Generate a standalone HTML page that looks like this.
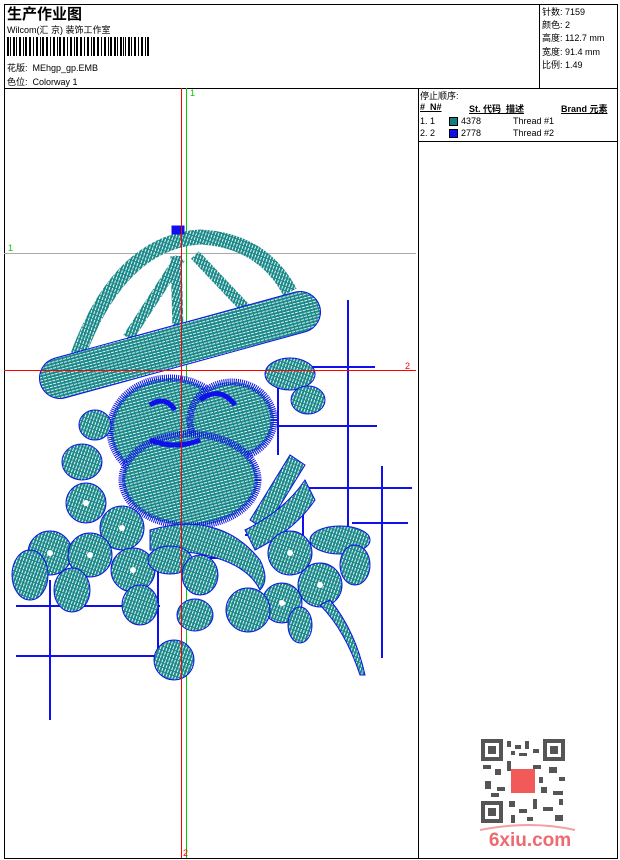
<!DOCTYPE html>
<html><head><meta charset="utf-8"><style>
body{margin:0;background:#fff;width:620px;height:860px;overflow:hidden;font-family:"Liberation Sans","Noto Sans CJK SC",sans-serif;color:#000}
.a{position:absolute;white-space:nowrap}
</style></head><body>
<svg width="620" height="860" style="position:absolute;left:0;top:0">
<defs>
<pattern id="h" width="4" height="3" patternUnits="userSpaceOnUse" patternTransform="rotate(-15)">
<rect width="4" height="3" fill="#1a8888"/><rect x="0" y="0" width="3" height="1" fill="#e0f2f2"/></pattern>
<pattern id="v" width="3" height="4" patternUnits="userSpaceOnUse" patternTransform="rotate(20)">
<rect width="3" height="4" fill="#1a8888"/><rect x="0" y="0" width="1" height="3" fill="#e8f6f6"/></pattern>
</defs>
<rect x="4.5" y="4.5" width="613" height="854" fill="none" stroke="#000"/>
<line x1="4" y1="88.5" x2="617" y2="88.5" stroke="#000"/>
<line x1="539.5" y1="4" x2="539.5" y2="88" stroke="#000"/>
<line x1="418.5" y1="88" x2="418.5" y2="858" stroke="#000"/>
<line x1="418" y1="141.5" x2="617" y2="141.5" stroke="#000"/>
<g fill="#000">
<rect x="7" y="37" width="2" height="19"/><rect x="10" y="37" width="1" height="19"/><rect x="13" y="37" width="2" height="19"/><rect x="16" y="37" width="1" height="19"/><rect x="19" y="37" width="2" height="19"/><rect x="23" y="37" width="1" height="19"/><rect x="25" y="37" width="2" height="19"/><rect x="29" y="37" width="2" height="19"/><rect x="33" y="37" width="1" height="19"/><rect x="36" y="37" width="2" height="19"/><rect x="40" y="37" width="1" height="19"/><rect x="42" y="37" width="2" height="19"/><rect x="46" y="37" width="2" height="19"/><rect x="50" y="37" width="1" height="19"/><rect x="53" y="37" width="2" height="19"/><rect x="57" y="37" width="1" height="19"/><rect x="59" y="37" width="2" height="19"/><rect x="63" y="37" width="2" height="19"/><rect x="67" y="37" width="1" height="19"/><rect x="70" y="37" width="2" height="19"/><rect x="74" y="37" width="1" height="19"/><rect x="76" y="37" width="2" height="19"/><rect x="80" y="37" width="2" height="19"/><rect x="84" y="37" width="1" height="19"/><rect x="87" y="37" width="2" height="19"/><rect x="91" y="37" width="1" height="19"/><rect x="93" y="37" width="2" height="19"/><rect x="97" y="37" width="2" height="19"/><rect x="101" y="37" width="1" height="19"/><rect x="104" y="37" width="2" height="19"/><rect x="108" y="37" width="1" height="19"/><rect x="110" y="37" width="2" height="19"/><rect x="114" y="37" width="2" height="19"/><rect x="117" y="37" width="1" height="19"/><rect x="120" y="37" width="2" height="19"/><rect x="123" y="37" width="1" height="19"/><rect x="125" y="37" width="1" height="19"/><rect x="128" y="37" width="2" height="19"/><rect x="131" y="37" width="1" height="19"/><rect x="134" y="37" width="2" height="19"/><rect x="138" y="37" width="1" height="19"/><rect x="141" y="37" width="2" height="19"/><rect x="145" y="37" width="1" height="19"/><rect x="147" y="37" width="2" height="19"/>
</g>
<line x1="4" y1="253.5" x2="416" y2="253.5" stroke="#aaa"/>
<line x1="186.5" y1="88" x2="186.5" y2="858" stroke="#0c0"/>
<g stroke="#1010ee" stroke-width="2" fill="none">
<path d="M348 300V530M283 367H375M278 426H377M278 372V455M382 466V658M302 488H412M352 523H408M303 490V558M50 580V720M16 606H160M16 656H155M158 540V655M158 558H245M245 535H300"/>
</g>
<g stroke="#1010ee" stroke-width="1">
<path d="M78 355Q120 242 200 237Q262 240 290 292" fill="none" stroke="url(#v)" stroke-width="15"/>
<path d="M180 258L128 338M176 256L178 330M195 255L245 308" stroke="url(#v)" stroke-width="11"/>
<path d="M172 226h12v8h-12z" fill="#1010ee"/>
<path d="M60 378L300 312" stroke="#1010ee" stroke-width="42" stroke-linecap="round"/>
<path d="M60 378L300 312" stroke="url(#h)" stroke-width="40" stroke-linecap="round"/>
<ellipse cx="170" cy="430" rx="60" ry="52" fill="url(#h)" stroke="#1010ee" stroke-width="7" stroke-dasharray="1 1"/>
<ellipse cx="232" cy="420" rx="42" ry="38" fill="url(#h)" stroke="#1010ee" stroke-width="7" stroke-dasharray="1 1"/>
<ellipse cx="190" cy="480" rx="68" ry="46" fill="url(#h)" stroke="#1010ee" stroke-width="7" stroke-dasharray="1 1"/>
<path d="M150 405q15-10 25 5M200 400q20-15 35 5M150 440q25 10 50 0" stroke="#1010ee" stroke-width="5" fill="none"/>
<ellipse cx="290" cy="374" rx="25" ry="16" fill="url(#v)"/>
<ellipse cx="308" cy="400" rx="17" ry="14" fill="url(#v)"/>
<ellipse cx="95" cy="425" rx="16" ry="15" fill="url(#v)"/>
<ellipse cx="82" cy="462" rx="20" ry="18" fill="url(#v)"/>
<path d="M250 520L290 455L305 465L265 530Z" fill="url(#v)"/>
<path d="M245 530q40-20 60-50l10 20q-20 30-60 50z" fill="url(#v)"/>
<path d="M150 530q70-20 110 30q10 20 0 30q-20-40-110-40z" fill="url(#v)"/>
<g fill="url(#v)">
<circle cx="86" cy="503" r="20"/><circle cx="122" cy="528" r="22"/><circle cx="50" cy="553" r="22"/><circle cx="90" cy="555" r="22"/><circle cx="133" cy="570" r="22"/>
<ellipse cx="30" cy="575" rx="18" ry="25"/><ellipse cx="72" cy="590" rx="18" ry="22"/><ellipse cx="140" cy="605" rx="18" ry="20"/><ellipse cx="170" cy="560" rx="22" ry="14"/>
<ellipse cx="200" cy="575" rx="18" ry="20"/><ellipse cx="195" cy="615" rx="18" ry="16"/><ellipse cx="174" cy="660" rx="20" ry="20"/>
<circle cx="290" cy="553" r="22"/><circle cx="320" cy="585" r="22"/><circle cx="282" cy="603" r="20"/>
<ellipse cx="248" cy="610" rx="22" ry="22"/><ellipse cx="340" cy="540" rx="30" ry="14"/><ellipse cx="355" cy="565" rx="15" ry="20"/><ellipse cx="300" cy="625" rx="12" ry="18"/>
<path d="M330 600q25 30 35 75l-5 0q-15-45-40-70z"/>
</g>
<g fill="#fff" stroke="none"><circle cx="86" cy="503" r="3"/><circle cx="122" cy="528" r="3"/><circle cx="50" cy="553" r="3"/><circle cx="90" cy="555" r="3"/><circle cx="133" cy="570" r="3"/><circle cx="290" cy="553" r="3"/><circle cx="320" cy="585" r="3"/><circle cx="282" cy="603" r="3"/></g>
</g>
<line x1="4" y1="370.5" x2="416" y2="370.5" stroke="#f00"/>
<line x1="181.5" y1="88" x2="181.5" y2="858" stroke="#f00"/>
<rect x="449.5" y="117.5" width="8" height="8" fill="#138080" stroke="#000"/>
<rect x="449.5" y="129.5" width="8" height="8" fill="#1010ee" stroke="#000"/>
<g fill="#555">
<path d="M481 739h22v22h-22zM485 743v14h14v-14zM488 746h8v8h-8z M543 739h22v22h-22zM547 743v14h14v-14zM550 746h8v8h-8z M481 801h22v22h-22zM485 805v14h14v-14zM488 808h8v8h-8z" fill-rule="evenodd"/>
<rect x="507" y="741" width="4" height="6"/><rect x="515" y="745" width="6" height="4"/><rect x="525" y="741" width="4" height="8"/><rect x="533" y="749" width="6" height="4"/><rect x="511" y="751" width="4" height="4"/><rect x="519" y="753" width="8" height="3"/><rect x="483" y="765" width="8" height="4"/><rect x="495" y="769" width="6" height="6"/><rect x="507" y="761" width="4" height="10"/><rect x="533" y="765" width="8" height="4"/><rect x="549" y="767" width="8" height="6"/><rect x="559" y="777" width="6" height="4"/><rect x="485" y="781" width="6" height="8"/><rect x="497" y="787" width="8" height="4"/><rect x="541" y="787" width="6" height="6"/><rect x="553" y="791" width="10" height="4"/><rect x="491" y="793" width="8" height="4"/><rect x="539" y="777" width="4" height="6"/><rect x="509" y="801" width="6" height="6"/><rect x="519" y="809" width="8" height="4"/><rect x="533" y="799" width="4" height="10"/><rect x="543" y="807" width="10" height="4"/><rect x="555" y="815" width="8" height="6"/><rect x="511" y="815" width="4" height="8"/><rect x="527" y="817" width="6" height="4"/><rect x="559" y="799" width="4" height="6"/>
</g>
<rect x="511" y="769" width="24" height="24" fill="#f25a5a"/>
<text x="530" y="846" font-family="Liberation Sans" font-weight="bold" font-size="19" fill="#ee6a70" text-anchor="middle">6xiu.com</text>
<path d="M480 830q50-10 95 0" stroke="#f3a0a5" stroke-width="2" fill="none"/>
<g font-family="Liberation Sans" font-size="9">
<text x="190" y="96" fill="#0c0">1</text><text x="8" y="251" fill="#0c0">1</text><text x="405" y="369" fill="#f00">2</text><text x="183" y="856" fill="#f00">2</text>
</g>
</svg>
<div class="a" style="left:7px;top:3px;font-size:15px;font-weight:bold">生产作业图</div>
<div class="a" style="left:7px;top:23px;font-size:9px">Wilcom(汇 京) 装饰工作室</div>
<div class="a" style="left:7px;top:61px;font-size:9px">花版:&nbsp; MEhgp_gp.EMB</div>
<div class="a" style="left:7px;top:75px;font-size:9px">色位:&nbsp; Colorway 1</div>
<div class="a" style="left:542px;top:6px;font-size:9px;line-height:13.2px">针数: 7159<br>颜色: 2<br>高度: 112.7 mm<br>宽度: 91.4 mm<br>比例: 1.49</div>
<div class="a" style="left:420px;top:89px;font-size:9px">停止顺序:</div>
<div class="a" style="left:420px;top:102px;font-size:9px;font-weight:bold;text-decoration:underline">#&nbsp; N#</div>
<div class="a" style="left:469px;top:102px;font-size:9px;font-weight:bold;text-decoration:underline">St. 代码&nbsp; 描述</div>
<div class="a" style="left:561px;top:102px;font-size:9px;font-weight:bold;text-decoration:underline">Brand 元素</div>
<div class="a" style="left:420px;top:116px;font-size:9px">1. 1</div><div class="a" style="left:461px;top:116px;font-size:9px">4378</div><div class="a" style="left:513px;top:116px;font-size:9px">Thread #1</div>
<div class="a" style="left:420px;top:128px;font-size:9px">2. 2</div><div class="a" style="left:461px;top:128px;font-size:9px">2778</div><div class="a" style="left:513px;top:128px;font-size:9px">Thread #2</div>
</body></html>
